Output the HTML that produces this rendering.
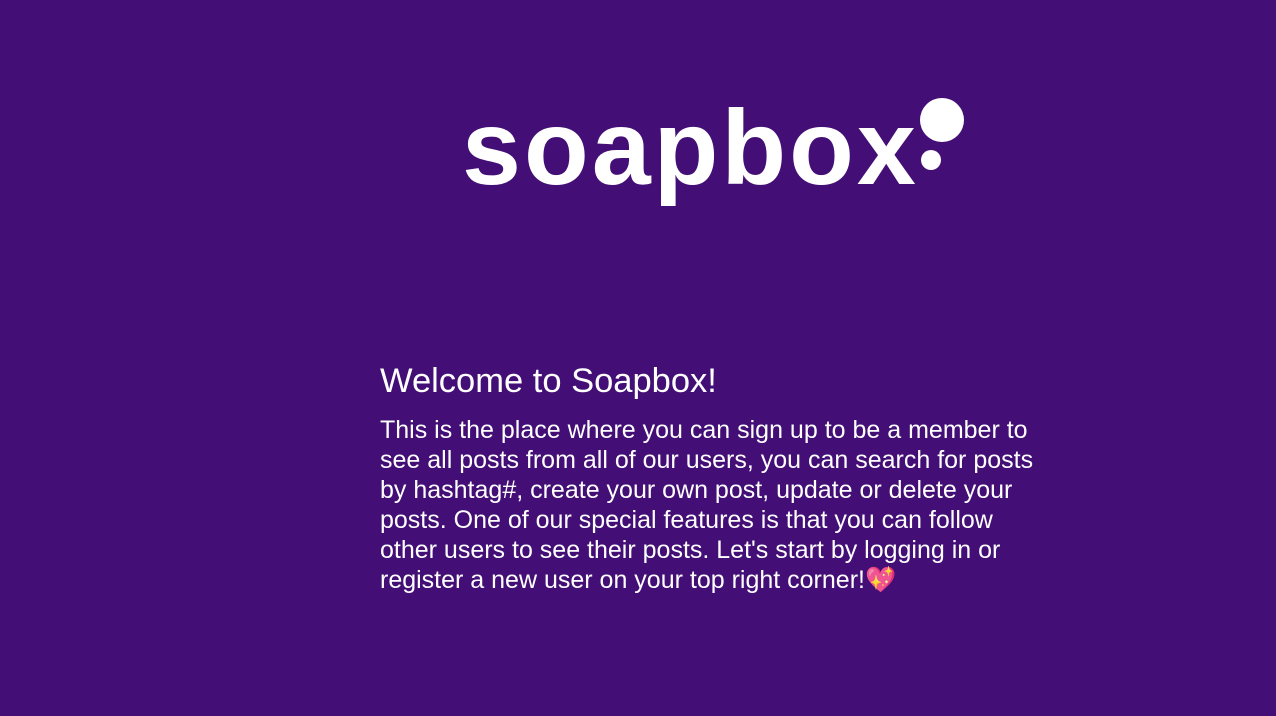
<!DOCTYPE html>
<html><head><meta charset="utf-8"><style>
html,body{margin:0;padding:0;width:1276px;height:716px;background:#430e75;overflow:hidden}
.logo{position:absolute;left:462px;top:83px;font-family:"Liberation Sans",sans-serif;font-weight:bold;font-size:106px;color:#fff;letter-spacing:3px;line-height:130px;white-space:nowrap}
.d{position:absolute;background:#fff;border-radius:50%}
.c{position:absolute;left:380px;top:359px;width:670px;font-family:"Liberation Sans",sans-serif;color:#fff}
h1{font-weight:normal;font-size:34.5px;margin:0 0 12px;line-height:44px}
p{font-size:25px;line-height:30px;margin:0}
</style></head><body>
<div class="logo">soapbox</div>
<div class="d" style="left:920px;top:98px;width:44px;height:44px"></div>
<div class="d" style="left:921px;top:150px;width:20px;height:20px"></div>
<div class="c"><h1>Welcome to Soapbox!</h1>
<p>This is the place where you can sign up to be a member to see all posts from all of our users, you can search for posts by hashtag#, create your own post, update or delete your posts. One of our special features is that you can follow other users to see their posts. Let's start by logging in or register a new user on your top right corner!<span style="color:#e8202a">💖</span></p></div>
</body></html>
